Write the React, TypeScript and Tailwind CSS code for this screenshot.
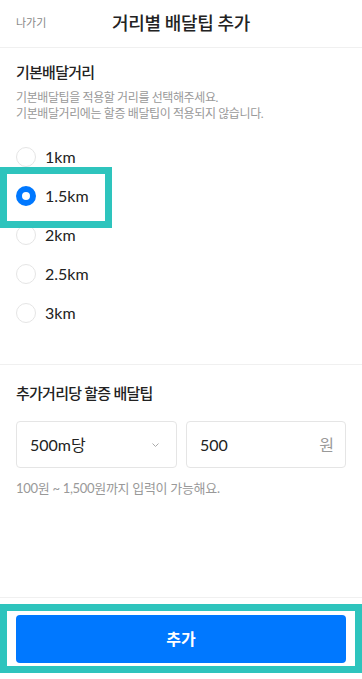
import { useState } from "react";

const distances = ["1km", "1.5km", "2km", "2.5km", "3km"];

export default function App() {
  const [selected, setSelected] = useState("1.5km");

  return (
    <div
      className="relative flex min-h-[679px] w-[362px] flex-col bg-white text-[#222]"
      style={{ fontFamily: 'Lato, "Noto Sans CJK KR", sans-serif' }}
    >
      {/* Header */}
      <div className="relative flex h-[48px] items-center justify-center border-b border-[#f0f0f0]">
        <button className="absolute left-4 text-[11px] text-[#888]">나가기</button>
        <h1 className="text-[18px] font-medium tracking-[-0.02em]">거리별 배달팁 추가</h1>
      </div>

      {/* 기본배달거리 */}
      <section className="px-4 pb-[32px] pt-[12px]">
        <h2 className="text-[15px] font-medium leading-[24px] tracking-[-0.05em]">기본배달거리</h2>
        <p className="mt-[6px] text-[12px] leading-[16px] tracking-[-0.4px] text-[#999]">
          기본배달팁을 적용할 거리를 선택해주세요.
          <br />
          기본배달거리에는 할증 배달팁이 적용되지 않습니다.
        </p>
        <div className="mt-[15px] flex flex-col">
          {distances.map((d) => (
            <label key={d} className="flex h-[39px] cursor-pointer items-center gap-[9px]" onClick={() => setSelected(d)}>
              {selected === d ? (
                <span className="h-[20px] w-[20px] rounded-full border-[6px] border-[#0078ff] bg-white" />
              ) : (
                <span className="h-[20px] w-[20px] rounded-full border border-[#e5e5e5] bg-white" />
              )}
              <span className="text-[16px]">{d}</span>
            </label>
          ))}
        </div>
      </section>

      {/* 추가거리당 할증 배달팁 */}
      <section className="border-t border-[#f0f0f0] px-4 pt-[16px]">
        <h2 className="text-[15px] font-medium leading-[24px] tracking-[-0.05em]">추가거리당 할증 배달팁</h2>
        <div className="mt-[16px] flex gap-[9px]">
          <div className="flex h-[47px] w-[161px] items-center justify-between rounded-[4px] border border-[#e5e5e5] pl-[13px] pr-[17px]">
            <span className="text-[16px]">500m당</span>
            <svg width="7" height="4" viewBox="0 0 7 4" fill="none">
              <path d="M0.5 0.5l3 3 3-3" stroke="#aaa" strokeWidth="1" />
            </svg>
          </div>
          <div className="flex h-[47px] w-[160px] items-center justify-between rounded-[4px] border border-[#e5e5e5] pl-[13px] pr-[11px]">
            <span className="text-[16px]">500</span>
            <span className="text-[16px] text-[#999]">원</span>
          </div>
        </div>
        <p className="mt-[10px] text-[13px] leading-[20px] tracking-[-0.3px] text-[#999]">100원 ~ 1,500원까지 입력이 가능해요.</p>
      </section>

      {/* Footer */}
      <div className="mt-auto border-t border-[#f0f0f0] px-4 pb-4 pt-[17px]">
        <button className="flex h-[48px] w-full items-center justify-center rounded-[4px] bg-[#0078ff] text-[16px] font-bold text-white">
          추가
        </button>
      </div>

      {/* Highlight overlays */}
      <div className="pointer-events-none absolute left-0 top-[167px] h-[61px] w-[112px] border-[7px] border-[#2ec4bd]" />
      <div className="pointer-events-none absolute left-0 top-[604px] h-[69px] w-[362px] border-[7px] border-[#2ec4bd]" />
    </div>
  );
}
